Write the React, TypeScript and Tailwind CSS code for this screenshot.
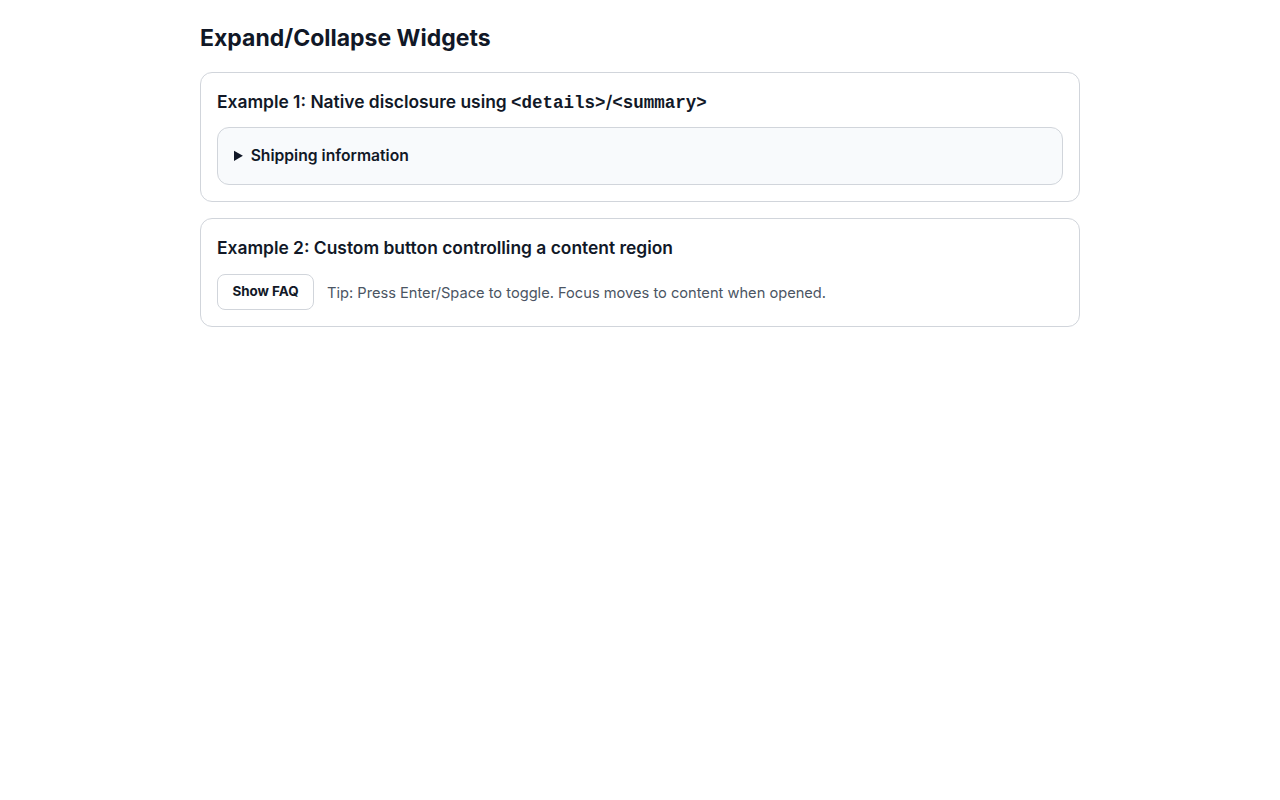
import React, { useState } from 'react';

const App = () => {
  const [open, setOpen] = useState(false);

  return (
    <div className="min-h-screen bg-white font-['Inter','Noto_Sans',sans-serif] text-[#111827]">
      <div className="mx-auto w-[880px] pt-6">
        <h1 className="mb-5 text-[23px] font-bold leading-7">Expand/Collapse Widgets</h1>

        <section className="mb-4 rounded-xl border border-[#d1d5db] p-4">
          <h2 className="mb-[11px] text-[17.4px] font-semibold leading-[26px]">
            Example 1: Native disclosure using{' '}
            <code className="font-['Liberation_Mono',monospace] text-[17.5px] font-bold">&lt;details&gt;</code>/
            <code className="font-['Liberation_Mono',monospace] text-[17.5px] font-bold">&lt;summary&gt;</code>
          </h2>
          <details className="min-h-[57.5px] rounded-xl border border-[#d1d5db] bg-[#f8fafc] px-4 pt-4 pb-4">
            <summary className="cursor-pointer text-[15.7px] font-semibold leading-[23.5px]">Shipping information</summary>
            <p className="mt-2 text-[15px] text-[#4b5563]">
              Orders ship within 2 business days. Free standard shipping on orders over $50.
            </p>
          </details>
        </section>

        <section className="rounded-xl border border-[#d1d5db] p-4">
          <h2 className="mb-[13px] text-[17.4px] font-semibold leading-[26px]">Example 2: Custom button controlling a content region</h2>
          <div className="flex items-center gap-[13px]">
            <button
              type="button"
              aria-expanded={open}
              aria-controls="faq-region"
              onClick={() => setOpen(!open)}
              className="h-9 w-[97px] rounded-lg border border-[#d1d5db] bg-white text-[13.4px] font-bold"
            >
              {open ? 'Hide FAQ' : 'Show FAQ'}
            </button>
            <span className="pt-[5px] text-[14.65px] text-[#4b5563]">
              Tip: Press Enter/Space to toggle. Focus moves to content when opened.
            </span>
          </div>
          {open && (
            <div id="faq-region" tabIndex={-1} className="mt-3 text-[15px] text-[#374151]">
              Frequently asked questions go here.
            </div>
          )}
        </section>
      </div>
    </div>
  );
};

export default App;
